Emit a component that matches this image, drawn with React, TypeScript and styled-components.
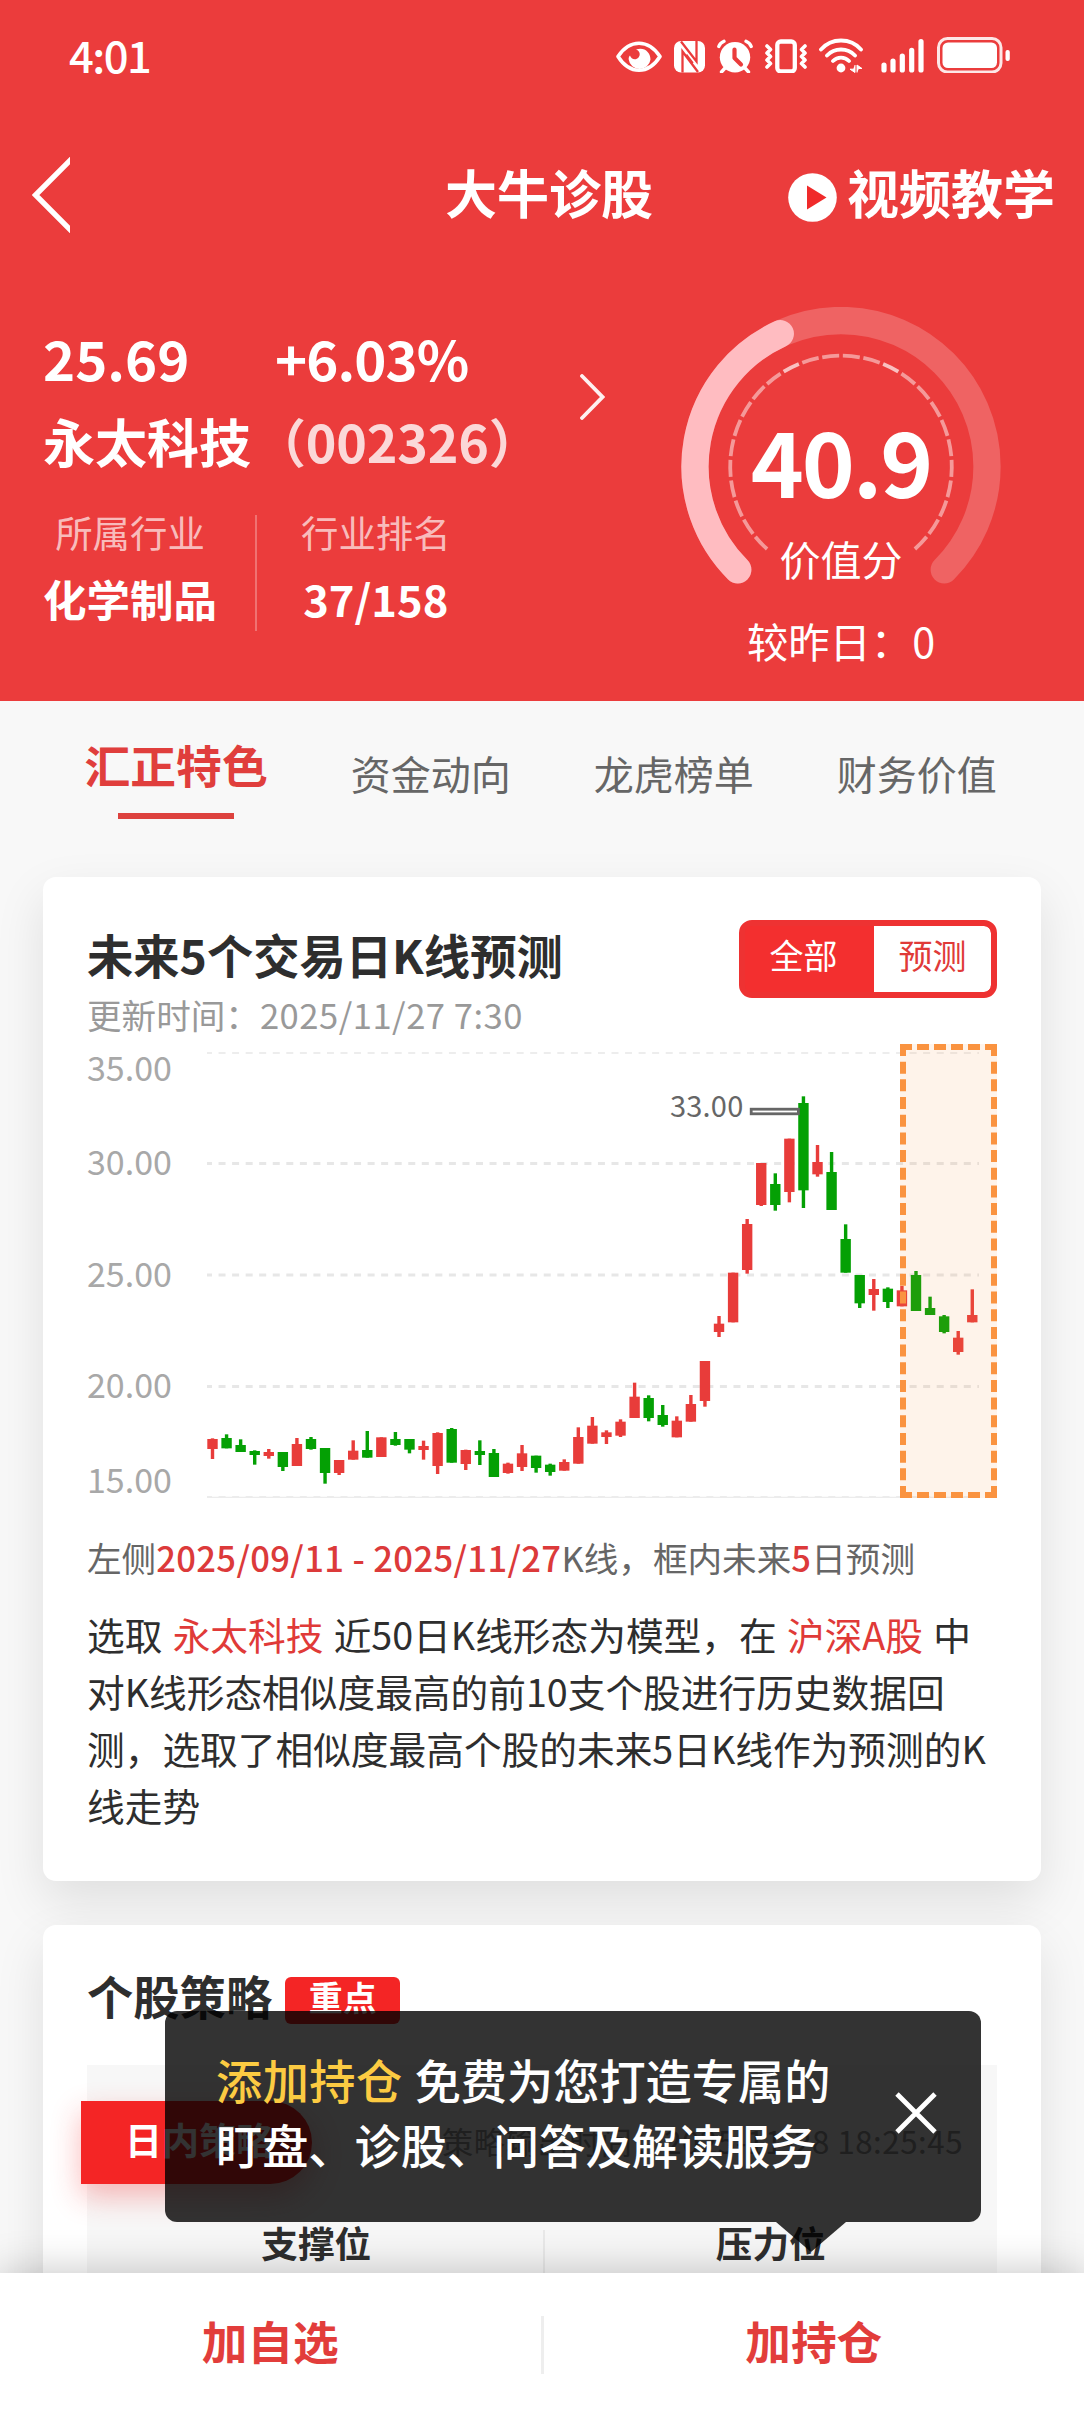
import React from "react";
import styled, { createGlobalStyle } from "styled-components";

const FONT = `"Noto Sans CJK SC", "Noto Sans", sans-serif`;

const GlobalStyle = createGlobalStyle`
  * { box-sizing: border-box; }
  body { margin: 0; background: #f8f8f8; font-family: ${FONT}; }
  svg { display: block; flex: none; }
`;

const Page = styled.div`
  position: relative;
  width: 1084px;
  height: 2412px;
  overflow: hidden;
  background: #f8f8f8;
  color: #2e2e2e;
`;

const Header = styled.header`
  background: #eb3c3c;
  color: #fff;
`;

const StatusBar = styled.div`
  display: flex;
  align-items: center;
  height: 110px;
  padding: 0 74px 0 69px;
`;

const Clock = styled.span`
  font-size: 43.5px;
  font-weight: 500;
  line-height: 50px;
  letter-spacing: -1.5px;
  padding-bottom: 1px;
`;

const StatusIcons = styled.div`
  display: flex;
  margin-left: auto;
`;

const IconSlot = styled.span<{ $gap: number }>`
  margin-left: ${(p) => p.$gap}px;
`;

const NavBar = styled.nav`
  display: flex;
  align-items: center;
  height: 169px;
  padding-left: 32px;
`;

const NavTitle = styled.h1`
  margin: 0 0 6px 375px;
  font-size: 52px;
  font-weight: 700;
  line-height: 60px;
`;

const VideoLink = styled.div`
  display: flex;
  align-items: center;
  margin-left: 135px;
  padding-top: 6px;
`;

const VideoLabel = styled.span`
  margin: 0 0 12px 10px;
  font-size: 52px;
  font-weight: 700;
  line-height: 60px;
`;

const Hero = styled.section`
  display: flex;
  align-items: flex-start;
  height: 422px;
  padding-left: 43px;
`;

const Quote = styled.div`
  width: 537px;
  padding-top: 49px;
`;

const PriceRow = styled.div`
  display: flex;
  font-size: 54.5px;
  font-weight: 700;
  line-height: 60px;
`;

const Price = styled.span<{ $width?: number; $tight?: boolean }>`
  width: ${(p) => (p.$width ? `${p.$width}px` : "auto")};
  letter-spacing: ${(p) => (p.$tight ? -0.9 : 0)}px;
`;

const NameRow = styled.div`
  display: flex;
  margin-top: 23px;
  font-size: 52px;
  font-weight: 700;
  line-height: 60px;
`;

const Code = styled.span`
  margin-left: 3px;
  color: rgba(255, 255, 255, 0.8);
  letter-spacing: -0.2px;
`;

const Stats = styled.div`
  display: flex;
  margin-top: 39px;
`;

const Stat = styled.div`
  display: flex;
  flex-direction: column;
  align-items: center;
  gap: 20px;
`;

const StatLabel = styled.span`
  font-size: 37.4px;
  line-height: 44px;
  color: rgba(255, 255, 255, 0.68);
`;

const StatValue = styled.span`
  font-size: 43.5px;
  font-weight: 700;
  line-height: 50px;
`;

const StatDivider = styled.i`
  width: 2px;
  height: 116px;
  margin: 5px 44px 0 38px;
  background: rgba(255, 255, 255, 0.28);
`;

const HeroArrow = styled.div`
  margin-top: 95px;
`;

const GaugeBox = styled.div`
  display: grid;
  justify-items: center;
  width: 320px;
  margin: 28px 0 0 76px;
  > * { grid-area: 1 / 1; }
`;

const GaugeText = styled.div`
  display: flex;
  flex-direction: column;
  align-items: center;
  padding-top: 106px;
  font-size: 41px;
  line-height: 50px;
`;

const Score = styled.strong`
  font-size: 90px;
  font-weight: 700;
  line-height: 92px;
  letter-spacing: -2px;
  margin-bottom: 28px;
`;

const Change = styled.span`
  margin-top: 32px;
  font-size: 41.3px;
`;

const Tabs = styled.div`
  display: flex;
  align-items: flex-start;
  gap: 83px;
  height: 176px;
  padding: 36px 0 0 84.5px;
`;

const Tab = styled.div<{ $active?: boolean }>`
  display: flex;
  flex-direction: column;
  align-items: center;
  margin-top: ${(p) => (p.$active ? 0 : 12)}px;
  font-size: ${(p) => (p.$active ? 45.8 : 40)}px;
  font-weight: ${(p) => (p.$active ? 700 : 400)};
  line-height: ${(p) => (p.$active ? 54 : 48)}px;
  color: ${(p) => (p.$active ? "#e03e3c" : "#666")};
`;

const TabLine = styled.i`
  width: 116px;
  height: 6px;
  margin-top: 22px;
  background: #dd423e;
`;

const Card = styled.section<{ $height: number }>`
  height: ${(p) => p.$height}px;
  margin: 0 43px 44px;
  padding: 43px 44px 0;
  border-radius: 13px;
  background: #fff;
  box-shadow: 0 20px 50px rgba(0, 0, 0, 0.1);
`;

const CardHead = styled.div`
  display: flex;
  justify-content: space-between;
  align-items: flex-start;
`;

const CardTitle = styled.h2`
  margin: 0;
  font-size: 46.3px;
  font-weight: 700;
  line-height: 54px;
`;

const HeadText = styled.div`
  padding-top: 7px;
`;

const Updated = styled.div`
  margin-top: 13px;
  font-size: 34.6px;
  line-height: 40px;
  color: #999;
`;

const UpdatedTime = styled.span`
  letter-spacing: 0.5px;
`;

const Toggle = styled.div`
  display: flex;
  width: 258px;
  height: 78px;
  border: 6px solid #ee3232;
  border-radius: 13px;
  background: #ee3232;
  overflow: hidden;
`;

const ToggleItem = styled.span<{ $selected?: boolean }>`
  flex: ${(p) => (p.$selected ? "0 0 129px" : "1")};
  padding-right: ${(p) => (p.$selected ? 12 : 0)}px;
  text-align: center;
  font-size: 34px;
  line-height: 57px;
  color: ${(p) => (p.$selected ? "#fff" : "#e03a38")};
  background: ${(p) => (p.$selected ? "#f32f2f" : "#fff")};
  border-radius: ${(p) => (p.$selected ? "0" : "0 7px 7px 0")};
`;

const ChartBox = styled.div`
  position: relative;
  height: 470px;
`;

const ForecastFrame = styled.div`
  position: absolute;
  top: 10px;
  right: 0;
  width: 97px;
  height: 454px;
  border: 6px dashed #fa9340;
  background: rgba(250, 147, 64, 0.11);
`;

const Legend = styled.p`
  margin: 31px 0 0;
  font-size: 34.6px;
  line-height: 44px;
  color: #666;
`;

const LegendMark = styled.span`
  color: #dc3a3a;
  font-weight: 500;
  letter-spacing: 0.35px;
`;

const Description = styled.p`
  width: 910px;
  margin: 26px 0 0;
  font-size: 37.7px;
  line-height: 57px;
  word-spacing: 1.8px;
`;

const Highlight = styled.span`
  color: #e03a38;
`;

const StrategyTitle = styled.div`
  display: flex;
  align-items: flex-start;
`;

const Badge = styled.span`
  width: 115px;
  height: 47px;
  margin: 9px 0 0 13px;
  border-radius: 6px;
  background: #f42525;
  color: #fff;
  text-align: center;
  font-size: 34px;
  font-weight: 700;
  line-height: 39px;
`;

const StrategyPanel = styled.div`
  height: 400px;
  margin-top: 41px;
  padding-top: 36px;
  background: #f7f7f7;
`;

const StrategyRow = styled.div`
  display: flex;
  align-items: center;
  justify-content: space-between;
  padding-right: 34px;
`;

const StrategyTag = styled.div`
  width: 231px;
  height: 83px;
  margin-left: -6px;
  padding-left: 44px;
  border-radius: 0 42px 42px 0;
  background: #f42525;
  box-shadow: 0 12px 30px rgba(244, 37, 37, 0.32);
  color: #fff;
  font-size: 37px;
  font-weight: 700;
  line-height: 77px;
`;

const StrategyTime = styled.span`
  font-size: 31.2px;
  line-height: 40px;
  letter-spacing: 0.55px;
  color: #999;
  padding-bottom: 4px;
`;

const Levels = styled.div`
  display: flex;
  padding-left: 3px;
  margin-top: 36px;
`;

const Level = styled.div`
  flex: 1;
  text-align: center;
  font-size: 36.7px;
  font-weight: 700;
  line-height: 44px;
`;

const LevelDivider = styled.i`
  width: 2px;
  height: 120px;
  margin-top: 10px;
  background: #e9e9e9;
`;

const BottomBar = styled.footer`
  position: absolute;
  left: 0;
  right: 0;
  bottom: 0;
  display: flex;
  align-items: center;
  height: 139px;
  background: #fff;
  box-shadow: 0 0 40px rgba(0, 0, 0, 0.24);
`;

const BottomAction = styled.div`
  flex: 1;
  padding-bottom: 5px;
  text-align: center;
  font-size: 45.7px;
  font-weight: 700;
  line-height: 54px;
  color: #e23d3b;
`;

const BottomDivider = styled.i`
  width: 3px;
  height: 58px;
  margin-top: 4px;
  background: #eee;
`;

const Toast = styled.aside`
  position: absolute;
  left: 165px;
  top: 2011px;
  display: flex;
  align-items: center;
  justify-content: space-between;
  width: 816px;
  height: 211px;
  padding: 0 44px 8px 51px;
  border-radius: 12px;
  background: rgba(0, 0, 0, 0.8);
  color: #fff;
  &::after {
    content: "";
    position: absolute;
    left: 611px;
    top: 100%;
    border: 35px solid transparent;
    border-top: 30px solid rgba(0, 0, 0, 0.8);
    border-bottom: 0;
  }
`;

const ToastText = styled.p`
  margin: 0;
  padding-bottom: 3px;
  font-size: 46.2px;
  font-weight: 500;
  line-height: 65px;
  word-spacing: 1.5px;
  white-space: nowrap;
`;

const ToastAccent = styled.span`
  color: #fccb42;
  letter-spacing: 0.5px;
`;

const EyeIcon = () => (
  <svg width="46" height="36" viewBox="0 0 46 36" fill="none">
    <path d="M2 19.5C8 10.500 15 6.300 23 6.300S38 10.500 44 19.500C38 29 31 33.200 23 33.200S8 29 2 19.500Z" stroke="#fff" strokeWidth="3.6" strokeLinejoin="round" />
    <path d="M20 12.500C28 9.500 34.500 15 34.500 22.500A11 11 0 0 1 12.700 22.500C12.500 20.500 13 19.500 14 18.500C15 22.500 20 23.500 22.500 20.500C25 17.500 23.500 13.500 20 12.500Z" fill="#fff" />
  </svg>
);

const NfcIcon = () => (
  <svg width="31" height="36" viewBox="0 0 31 36" fill="none">
    <rect x="0" y="4" width="31" height="31.500" rx="7" fill="#fff" />
    <path d="M7 4.500L22.500 24.500V4M8.500 35.500V14.500L24 35" stroke="#eb3c3c" strokeWidth="2.300" />
    <path d="M12.500 17.500L19 26" stroke="#eb3c3c" strokeWidth="1.500" />
  </svg>
);

const AlarmIcon = () => (
  <svg width="36" height="36" viewBox="0 0 36 36" fill="none">
    <circle cx="18" cy="20.300" r="15.200" fill="#fff" />
    <path d="M1.800 9.500Q3 6 7 4.300M34.200 9.500Q33 6 29 4.300M8.500 30.500L4.500 35M27.500 30.500L31.500 35" stroke="#fff" strokeWidth="3.400" strokeLinecap="round" />
    <path d="M17.500 12.500V21L24 27.500" stroke="#eb3c3c" strokeWidth="4.200" strokeLinecap="round" strokeLinejoin="round" />
  </svg>
);

const VibrateIcon = () => (
  <svg width="42" height="36" viewBox="0 0 42 36" fill="none">
    <rect x="12.300" y="4.500" width="17.500" height="30" rx="3.500" stroke="#fff" strokeWidth="4.300" />
    <path d="M2 9L5.500 12.500L2 16L5.500 19.500L2 23L5.500 26.500L2 30M40 9L36.500 12.500L40 16L36.500 19.500L40 23L36.500 26.500L40 30" stroke="#fff" strokeWidth="3.600" strokeLinejoin="round" strokeLinecap="round" />
  </svg>
);

const WifiIcon = () => (
  <svg width="45" height="36" viewBox="0 0 45 36" fill="none">
    <path d="M2 12.500C12.500 .5 31.500 .5 42 12.500M8 18.500C15.500 10.500 28.500 10.500 36 18.500M14 24C18.500 19.500 25.500 19.500 30 24" stroke="#fff" strokeWidth="3.800" strokeLinecap="round" />
    <circle cx="22" cy="31" r="4.400" fill="#fff" />
    <path d="M36 28V35.500L31 32.200H34M38 35.500V28L43 31.500H40" fill="#fff" stroke="#fff" strokeWidth="1" />
  </svg>
);

const SignalIcon = () => (
  <svg width="44" height="36" viewBox="0 0 44 36" fill="none">
    <path d="M3 28V33M12 24V33M21.300 19V33M30.700 13.300V33M40 4.500V33" stroke="#fff" strokeWidth="5.200" strokeLinecap="round" />
  </svg>
);

const BatteryIcon = () => (
  <svg width="73" height="36" viewBox="0 0 73 36" fill="none">
    <rect x="1.500" y="1.500" width="62.500" height="33.500" rx="9" stroke="#fff" strokeOpacity=".88" strokeWidth="3" />
    <rect x="5.500" y="5.500" width="54.500" height="25.500" rx="5.500" fill="#fff" />
    <rect x="68.500" y="13" width="4.300" height="11" rx="2" fill="#fff" />
  </svg>
);

const point = (cx: number, cy: number, r: number, deg: number) => {
  const a = (deg * Math.PI) / 180;
  return `${(cx + r * Math.cos(a)).toFixed(2)} ${(cy + r * Math.sin(a)).toFixed(2)}`;
};

const arc = (r: number, from: number, to: number) =>
  `M${point(160, 159.5, r, from)}A${r} ${r} 0 ${to - from > 180 ? 1 : 0} 1 ${point(160, 159.5, r, to)}`;

const TICKS = 26;
const TICK_STEP = 10.7;

const Gauge = ({ value }: { value: number }) => (
  <svg width="320" height="290" viewBox="0 0 320 290" fill="none">
    <path d={arc(146, 135, 405)} stroke="#fff" strokeOpacity=".2" strokeWidth="27.300" strokeLinecap="round" />
    <path d={arc(146, 135, 135 + value * 2.7)} stroke="#ffbcc1" strokeWidth="27.300" strokeLinecap="round" />
    {Array.from({ length: TICKS }, (_, i) => {
      const mid = 270 + (i - (TICKS - 1) / 2) * TICK_STEP;
      const bright = i === 10 || i === 15;
      return (
        <path key={i} d={arc(110.8, mid - 4.4, mid + 4.4)} stroke="#fff" strokeOpacity={bright ? 0.68 : 0.48} strokeWidth="3.800" />
      );
    })}
  </svg>
);

type Candle = ["r" | "g", number, number, number, number];

// colour, then wick top, body top, body bottom, wick bottom, in thirds of a pixel
const CANDLES: Candle[] = [
  ["r", 1225, 1227, 1257, 1287], ["g", 1213, 1224, 1255, 1255], ["g", 1228, 1245, 1266, 1266],
  ["g", 1261, 1263, 1275, 1304], ["r", 1257, 1266, 1278, 1286], ["g", 1266, 1266, 1311, 1323],
  ["r", 1224, 1242, 1308, 1308], ["g", 1221, 1227, 1257, 1259], ["g", 1254, 1254, 1329, 1361],
  ["r", 1290, 1290, 1329, 1335], ["r", 1231, 1262, 1289, 1289], ["g", 1203, 1260, 1283, 1283],
  ["r", 1222, 1222, 1281, 1281], ["g", 1206, 1227, 1245, 1247], ["g", 1227, 1227, 1259, 1270],
  ["r", 1232, 1248, 1260, 1289], ["r", 1207, 1209, 1308, 1332], ["g", 1194, 1197, 1298, 1298],
  ["r", 1259, 1260, 1302, 1320], ["g", 1231, 1263, 1275, 1305], ["g", 1257, 1269, 1341, 1341],
  ["r", 1298, 1301, 1329, 1331], ["r", 1245, 1270, 1311, 1323], ["g", 1277, 1277, 1314, 1328],
  ["g", 1301, 1304, 1326, 1337], ["r", 1288, 1296, 1322, 1322], ["r", 1192, 1221, 1301, 1301],
  ["r", 1161, 1187, 1241, 1241], ["r", 1201, 1207, 1221, 1242], ["r", 1168, 1175, 1217, 1221],
  ["r", 1058, 1100, 1164, 1164], ["g", 1096, 1104, 1164, 1174], ["g", 1125, 1155, 1185, 1190],
  ["r", 1159, 1172, 1222, 1222], ["r", 1095, 1122, 1175, 1175], ["r", 993, 993, 1113, 1130],
  ["r", 858, 881, 906, 921], ["r", 728, 728, 877, 877], ["r", 567, 582, 720, 731],
  ["r", 399, 399, 525, 528], ["g", 430, 462, 525, 542], ["r", 326, 326, 486, 517],
  ["g", 199, 219, 481, 534], ["r", 345, 396, 433, 440], ["g", 366, 426, 540, 540],
  ["g", 583, 627, 728, 728], ["g", 735, 735, 820, 834], ["r", 747, 777, 795, 842],
  ["g", 772, 776, 816, 834], ["r", 768, 781, 829, 829], ["g", 723, 735, 843, 843],
  ["g", 800, 834, 855, 855], ["g", 855, 859, 906, 910], ["r", 903, 923, 966, 974],
  ["r", 778, 855, 877, 877],
];

const toY = (v: number) => v / 3 - 4;

const AXIS = [
  { label: "35.00", baseline: 47, line: 19, thick: 1.4 },
  { label: "30.00", baseline: 141, line: 129.5, thick: 3 },
  { label: "25.00", baseline: 253, line: 241, thick: 3 },
  { label: "20.00", baseline: 364, line: 352.5, thick: 3 },
  { label: "15.00", baseline: 459, line: 463, thick: 1.4 },
];

const KLineChart = () => (
  <svg width="910" height="470" viewBox="0 0 910 470" fontFamily={FONT}>
    {AXIS.map((a) => (
      <g key={a.label}>
        <text x="0" y={a.baseline} fontSize="34" fill="#a8a8a8">{a.label}</text>
        <line x1="120" x2="892" y1={a.line} y2={a.line} stroke="#e7e7e7" strokeWidth={a.thick} strokeDasharray="7 6.55" strokeDashoffset="2" />
      </g>
    ))}
    <line x1="120" x2="892" y1="463.3" y2="463.3" stroke="#ececec" strokeWidth="1.2" />
    {CANDLES.map(([tone, wickTop, bodyTop, bodyBottom, wickBottom], i) => {
      const x = 125.5 + i * 14.07;
      return (
        <g key={i} fill={tone === "r" ? "#e83c3a" : "#04a004"}>
          <rect x={x - 1.7} y={toY(wickTop)} width="3.4" height={(wickBottom - wickTop) / 3} />
          <rect x={x - 5.2} y={toY(bodyTop)} width="10.4" height={(bodyBottom - bodyTop) / 3} />
        </g>
      );
    })}
    <text x="583" y="83" fontSize="29" letterSpacing=".2" fill="#666">33.00</text>
    <rect x="664.2" y="75.2" width="47.200" height="4.600" fill="#fff" stroke="#666" strokeWidth="2.800" />
  </svg>
);

export default function App() {
  return (
    <Page>
      <GlobalStyle />
      <Header>
        <StatusBar>
          <Clock>4:01</Clock>
          <StatusIcons>
            <EyeIcon />
            <IconSlot $gap={12}><NfcIcon /></IconSlot>
            <IconSlot $gap={12}><AlarmIcon /></IconSlot>
            <IconSlot $gap={12}><VibrateIcon /></IconSlot>
            <IconSlot $gap={12}><WifiIcon /></IconSlot>
            <IconSlot $gap={17}><SignalIcon /></IconSlot>
            <IconSlot $gap={12}><BatteryIcon /></IconSlot>
          </StatusIcons>
        </StatusBar>
        <NavBar>
          <svg width="38" height="76" viewBox="0 0 38 76" fill="none">
            <path d="M40 1.500L3.500 38L40 74.500" stroke="#fff" strokeWidth="5.400" />
          </svg>
          <NavTitle>大牛诊股</NavTitle>
          <VideoLink>
            <svg width="49" height="49" viewBox="0 0 49 49">
              <circle cx="24.500" cy="24.500" r="24.300" fill="#fff" />
              <path d="M19 12.500L38.500 24.500L19 36.500Z" fill="#f02a2a" />
            </svg>
            <VideoLabel>视频教学</VideoLabel>
          </VideoLink>
        </NavBar>
        <Hero>
          <Quote>
            <PriceRow>
              <Price $width={232}>25.69</Price>
              <Price $tight>+6.03%</Price>
            </PriceRow>
            <NameRow>
              <span>永太科技</span>
              <Code>（002326）</Code>
            </NameRow>
            <Stats>
              <Stat>
                <StatLabel>所属行业</StatLabel>
                <StatValue>化学制品</StatValue>
              </Stat>
              <StatDivider />
              <Stat>
                <StatLabel>行业排名</StatLabel>
                <StatValue>37/158</StatValue>
              </Stat>
            </Stats>
          </Quote>
          <HeroArrow>
            <svg width="25" height="46" viewBox="0 0 25 46" fill="none">
              <path d="M2 2L22.500 23L2 44" stroke="#fff" strokeOpacity=".93" strokeWidth="3.800" strokeLinecap="round" />
            </svg>
          </HeroArrow>
          <GaugeBox>
            <Gauge value={40.9} />
            <GaugeText>
              <Score>40.9</Score>
              <span>价值分</span>
              <Change>较昨日：0</Change>
            </GaugeText>
          </GaugeBox>
        </Hero>
      </Header>

      <Tabs>
        <Tab $active>汇正特色<TabLine /></Tab>
        <Tab>资金动向</Tab>
        <Tab>龙虎榜单</Tab>
        <Tab>财务价值</Tab>
      </Tabs>

      <Card $height={1004}>
        <CardHead>
          <HeadText>
            <CardTitle>未来5个交易日K线预测</CardTitle>
            <Updated>更新时间：<UpdatedTime>2025/11/27 7:30</UpdatedTime></Updated>
          </HeadText>
          <Toggle>
            <ToggleItem $selected>全部</ToggleItem>
            <ToggleItem>预测</ToggleItem>
          </Toggle>
        </CardHead>
        <ChartBox>
          <KLineChart />
          <ForecastFrame />
        </ChartBox>
        <Legend>
          左侧<LegendMark>2025/09/11 - 2025/11/27</LegendMark>K线，框内未来<LegendMark>5</LegendMark>日预测
        </Legend>
        <Description>
          选取 <Highlight>永太科技</Highlight> 近50日K线形态为模型，在 <Highlight>沪深A股</Highlight> 中<br />
          对K线形态相似度最高的前10支个股进行历史数据回<br />
          测，选取了相似度最高个股的未来5日K线作为预测的K<br />
          线走势
        </Description>
      </Card>

      <Card $height={600}>
        <StrategyTitle>
          <CardTitle>个股策略</CardTitle>
          <Badge>重点</Badge>
        </StrategyTitle>
        <StrategyPanel>
          <StrategyRow>
            <StrategyTag>日内策略</StrategyTag>
            <StrategyTime>策略输出时间：2025-11-28 18:25:45</StrategyTime>
          </StrategyRow>
          <Levels>
            <Level>支撑位</Level>
            <LevelDivider />
            <Level>压力位</Level>
          </Levels>
        </StrategyPanel>
      </Card>

      <BottomBar>
        <BottomAction>加自选</BottomAction>
        <BottomDivider />
        <BottomAction>加持仓</BottomAction>
      </BottomBar>

      <Toast>
        <ToastText>
          <ToastAccent>添加持仓</ToastAccent> 免费为您打造专属的
          <br />
          盯盘、诊股、问答及解读服务
        </ToastText>
        <svg width="42" height="42" viewBox="0 0 42 42" fill="none">
          <path d="M2 2L40 40M40 2L2 40" stroke="#fff" strokeWidth="4.800" />
        </svg>
      </Toast>
    </Page>
  );
}
